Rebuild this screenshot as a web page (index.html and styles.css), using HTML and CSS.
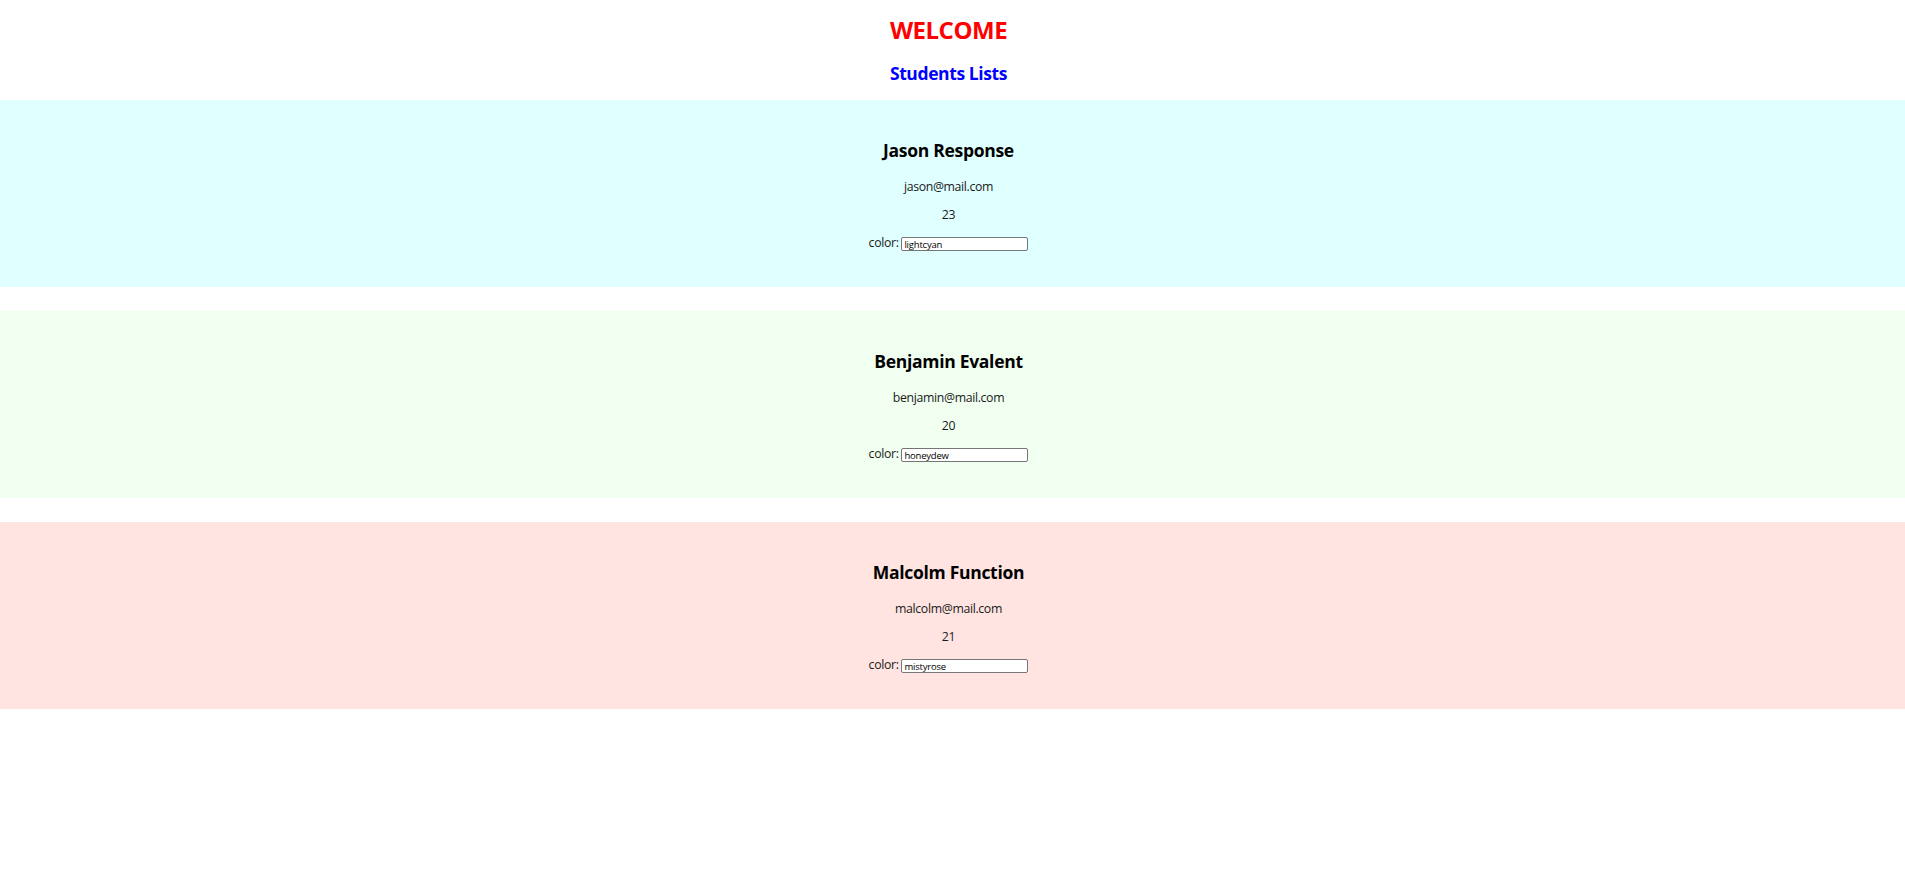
FILE: index.html
```html
<!DOCTYPE html>
<html lang="en">
<head>
<meta charset="utf-8">
<title>Students</title>
<link rel="stylesheet" href="styles.css">
</head>
<body>
<header class="header">
  <h1 class="title">WELCOME</h1>
  <h2 class="subtitle">Students Lists</h2>
</header>
<main class="list">
  <section class="card card-cyan">
    <h3 class="name">Jason Response</h3>
    <p class="info info-email">jason@mail.com</p>
    <p class="info info-age">23</p>
    <div class="color-row"><label class="color-label" for="c1">color:</label> <input class="color-input" id="c1" type="text" value="lightcyan"></div>
  </section>
  <section class="card card-honeydew">
    <h3 class="name">Benjamin Evalent</h3>
    <p class="info info-email">benjamin@mail.com</p>
    <p class="info info-age">20</p>
    <div class="color-row"><label class="color-label" for="c2">color:</label> <input class="color-input" id="c2" type="text" value="honeydew"></div>
  </section>
  <section class="card card-rose">
    <h3 class="name">Malcolm Function</h3>
    <p class="info info-email">malcolm@mail.com</p>
    <p class="info info-age">21</p>
    <div class="color-row"><label class="color-label" for="c3">color:</label> <input class="color-input" id="c3" type="text" value="mistyrose"></div>
  </section>
</main>
</body>
</html>
```

FILE: styles.css
```css
html, body {
  margin: 0;
  padding: 0;
  background: #ffffff;
}

body {
  font-family: "Open Sans", "Noto Sans", sans-serif;
  color: #000000;
  text-align: center;
}

.header {
  display: flex;
  flex-direction: column;
  align-items: center;
  padding-right: 8px;
}

.title {
  margin: 14px 0 0;
  font-size: 24px;
  line-height: 32px;
  font-weight: 700;
  letter-spacing: -0.5px;
  color: #ff0000;
}

.subtitle {
  margin: 15px 0 0;
  font-size: 17.5px;
  line-height: 25px;
  font-weight: 700;
  letter-spacing: -0.4px;
  color: #0000ff;
}

.list {
  display: flex;
  flex-direction: column;
  gap: 24px;
  margin-top: 14px;
}

.card {
  height: 187px;
  box-sizing: border-box;
  padding: 38px 8px 0 0;
}

.card-cyan { background: #e0ffff; }
.card-honeydew { background: #f0fff0; }
.card-rose { background: #ffe4e1; }

.name {
  margin: 0;
  font-size: 17.5px;
  line-height: 25px;
  font-weight: 700;
  letter-spacing: -0.3px;
}

.info {
  margin: 0;
  font-size: 12.3px;
  line-height: 18px;
  letter-spacing: -0.35px;
  color: #1a1a1a;
}

.info-email { margin-top: 14.5px; }
.info-age { margin-top: 10px; }

.color-row {
  margin-top: 10px;
  font-size: 12.3px;
  line-height: 18px;
  letter-spacing: -0.35px;
  color: #1a1a1a;
}

.color-input {
  box-sizing: border-box;
  width: 127px;
  height: 14px;
  padding: 0 2px;
  border: 1px solid #767676;
  border-radius: 2px;
  background: #ffffff;
  font-family: "Open Sans", "Noto Sans", sans-serif;
  font-size: 9.5px;
  letter-spacing: -0.2px;
  color: #000000;
  vertical-align: -1px;
}
```
